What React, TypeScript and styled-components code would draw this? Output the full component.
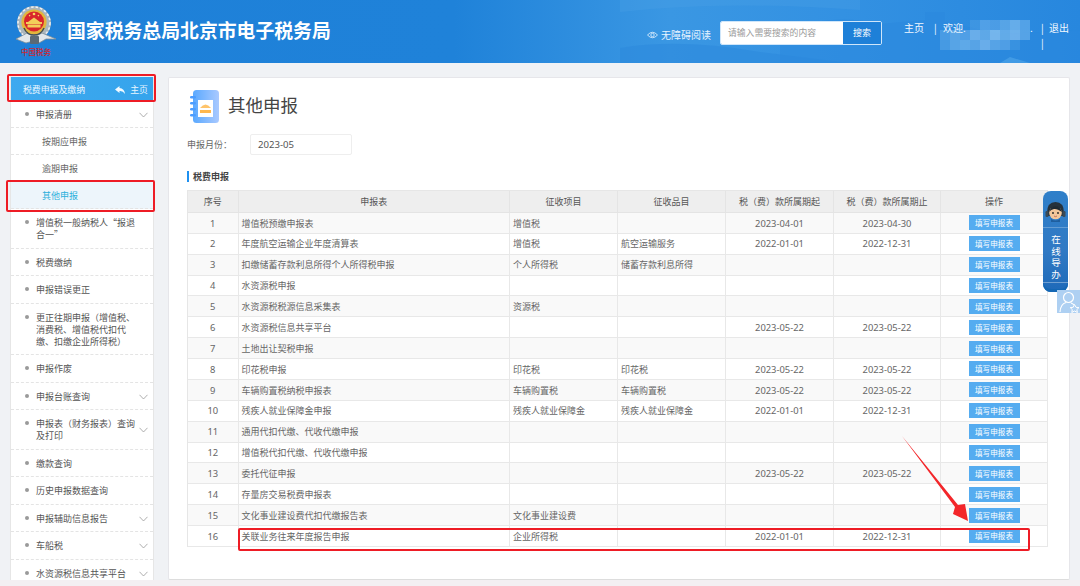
import React from "react";
import styled, { createGlobalStyle } from "styled-components";

const Global = createGlobalStyle`
  html, body { margin: 0; padding: 0; }
  body { font-family: "Noto Sans CJK SC", "Noto Sans", sans-serif; background: #f0f2f5; }
  * { box-sizing: border-box; }
`;

const Page = styled.div`
  position: relative;
  width: 1080px;
  height: 586px;
  overflow: hidden;
  display: flex;
  flex-direction: column;
  background: #f0f2f5;
`;

const Header = styled.header`
  position: relative;
  flex: 0 0 63px;
  display: flex;
  align-items: flex-start;
  background: linear-gradient(90deg, #1e80d8 0%, #1f82d9 42%, #3a97e3 62%, #3391e2 78%, #2787de 100%);
  color: #fff;
  overflow: hidden;
`;

const Scenery = styled.svg`
  position: absolute;
  left: 0;
  top: 0;
`;

const LogoWrap = styled.div`
  position: relative;
  width: 42px;
  margin: 6px 0 0 15px;
  display: flex;
  flex-direction: column;
  align-items: center;
`;

const LogoMotto = styled.span`
  margin-top: -1px;
  font-size: 7.5px;
  line-height: 11px;
  font-weight: 500;
  color: #d0252e;
  white-space: nowrap;
`;

const SiteTitle = styled.h1`
  position: relative;
  margin: 17px 0 0 10px;
  font-size: 18.85px;
  line-height: 26px;
  font-weight: 700;
  white-space: nowrap;
`;

const HeaderRight = styled.div`
  position: relative;
  margin-left: auto;
  display: flex;
  align-items: flex-start;
`;

const Access = styled.div`
  display: flex;
  align-items: center;
  gap: 3px;
  margin-top: 27px;
  font-size: 10px;
  line-height: 16px;
  color: #e6f3ff;
`;

const SearchBox = styled.div`
  width: 162px;
  height: 24px;
  margin: 21px 0 0 9px;
  display: flex;
  border: 1px solid #cfe6fa;
  border-radius: 2px;
  overflow: hidden;
`;

const SearchField = styled.div`
  flex: 1;
  background: #fff;
  color: #9a9a9a;
  font-size: 8.8px;
  line-height: 22px;
  padding-left: 7px;
`;

const SearchButton = styled.div`
  width: 38px;
  background: #1e80d8;
  color: #fff;
  font-size: 9px;
  line-height: 22px;
  text-align: center;
`;

const Nav = styled.nav`
  width: 198px;
  margin-top: 20px;
  padding-left: 22px;
  font-size: 10px;
  line-height: 16px;
  color: #f1f8ff;
`;

const NavLine = styled.div<{ $indent?: number }>`
  display: flex;
  height: 15px;
  padding-left: ${(p) => p.$indent ?? 0}px;
`;

const NavText = styled.span<{ $w: number }>`
  width: ${(p) => p.$w}px;
  white-space: nowrap;
`;

const Mosaic = styled.div`
  position: absolute;
  left: 940px;
  top: 20px;
  display: grid;
  grid-template-columns: repeat(9, 10px);
  grid-auto-rows: 10px;
`;

const Tile = styled.i<{ $a: number }>`
  display: block;
  background: rgba(190, 225, 250, ${(p) => p.$a});
`;

const Body = styled.div`
  flex: 1;
  min-height: 0;
  display: flex;
  padding: 14px 10px 0;
  gap: 14px;
`;

const Sidebar = styled.aside`
  flex: 0 0 144px;
  background: #fff;
  border-left: 1px solid #e6e6e6;
  border-right: 1px solid #e6e6e6;
  overflow: hidden;
`;

const SideHead = styled.div`
  height: 24px;
  margin: 0 -1px;
  display: flex;
  align-items: center;
  justify-content: space-between;
  padding: 1px 6px 0 13px;
  background: linear-gradient(90deg, #3ea9ef, #35a4ec);
  color: #e9f6ff;
  font-size: 8.9px;
`;

const HomeLink = styled.span`
  display: flex;
  align-items: center;
  gap: 5px;
`;

const SideItem = styled.div<{ $sub?: boolean; $active?: boolean; $tight?: boolean }>`
  position: relative;
  display: flex;
  align-items: flex-start;
  padding: 8px 0 ${(p) => (p.$tight ? 6 : 6.5)}px ${(p) => (p.$sub ? 31 : 14)}px;
  border-bottom: 1px dashed #e4e4e4;
  font-size: 9px;
  line-height: 12px;
  color: ${(p) => (p.$active ? "#2bb0dc" : p.$sub ? "#666" : "#555")};
  background: ${(p) => (p.$active ? "#edf5fb" : "#fff")};
`;

const Bullet = styled.i`
  flex: 0 0 4px;
  width: 4px;
  height: 4px;
  margin: 3px 7px 0 0;
  border-radius: 50%;
  background: #9a9a9a;
`;

const SideLabel = styled.span`
  width: 101px;
`;

const Chevron = styled.svg<{ $mid?: boolean }>`
  margin: ${(p) => (p.$mid ? "9px" : "3px")} 0 0 2px;
`;

const Panel = styled.main`
  position: relative;
  flex: 1;
  background: #fff;
  border: 1px solid #e6e6ea;
  border-bottom-color: #ddd;
  border-radius: 2px;
  padding: 11px 0 0 18px;
`;

const TitleRow = styled.div`
  display: flex;
  align-items: center;
  height: 34px;
  padding-left: 3px;
  gap: 9px;
`;

const PageTitle = styled.h2`
  margin: 0 0 2px;
  font-size: 17.5px;
  line-height: 24px;
  font-weight: 400;
  color: #444;
`;

const MonthRow = styled.div`
  display: flex;
  align-items: center;
  margin-top: 11px;
  font-size: 9px;
  color: #666;
`;

const MonthLabel = styled.span`
  width: 63px;
`;

const MonthField = styled.div`
  width: 102px;
  height: 21px;
  padding-left: 7px;
  border: 1px solid #eee;
  border-radius: 2px;
  font-family: "Noto Sans", sans-serif;
  font-size: 9.6px;
  line-height: 19px;
  color: #555;
`;

const Section = styled.h3`
  display: flex;
  align-items: center;
  gap: 4px;
  height: 12px;
  margin: 15px 0 7.5px;
  font-size: 9px;
  font-weight: 700;
  color: #444;
  &::before {
    content: "";
    width: 2px;
    height: 11px;
    background: #1e90f0;
  }
`;

const Table = styled.table`
  width: 860px;
  table-layout: fixed;
  border-collapse: separate;
  border-spacing: 0;
  border-top: 1px solid #e6e6e6;
  border-left: 1px solid #e6e6e6;
  font-size: 9px;
  color: #666;
`;

const Th = styled.th`
  height: 22.4px;
  padding: 1px 0 0;
  background: #eeeeee;
  border-right: 1px solid #e4e4e4;
  border-bottom: 1px solid #e4e4e4;
  font-weight: 400;
  color: #555;
  text-align: center;
`;

const Row = styled.tr`
  &:nth-child(odd) td { background: #f9f9f9; }
`;

const Td = styled.td<{ $center?: boolean; $num?: boolean; $flush?: boolean }>`
  height: 20.875px;
  padding: ${(p) => (p.$flush ? "0 3px" : "1.5px 3px 0")};
  background: #fff;
  border-right: 1px solid #e8e8e8;
  border-bottom: 1px solid #e8e8e8;
  text-align: ${(p) => (p.$center ? "center" : "left")};
  font-family: ${(p) => (p.$num ? '"Noto Sans", sans-serif' : "inherit")};
  font-size: ${(p) => (p.$num ? "9.4px" : "9px")};
  line-height: 12px;
  white-space: nowrap;
`;

const FillButton = styled.div`
  width: 51px;
  height: 15px;
  margin: 0 auto;
  background: #55acf0;
  color: #fff;
  font-size: 7.6px;
  line-height: 15px;
  text-align: center;
`;

const Footer = styled.div`
  flex: 0 0 6px;
  background: #f3eff2;
`;

const Helper = styled.div`
  position: absolute;
  left: 1043px;
  top: 191px;
  width: 25px;
  height: 101px;
  border-radius: 8px;
  background: linear-gradient(180deg, #2f7fc9, #3079c4 60%, #1e69b8);
  display: flex;
  flex-direction: column;
  align-items: center;
  color: #fff;
  box-shadow: inset 0 -3px 0 #1467b4;
`;

const HelperFace = styled.svg`
  margin-top: 10px;
  flex: none;
`;

const HelperText = styled.div`
  width: 100%;
  height: 56px;
  margin-top: 5px;
  padding-top: 5px;
  border-top: 1px solid rgba(255, 255, 255, 0.25);
  border-bottom: 1px solid rgba(255, 255, 255, 0.35);
  display: flex;
  justify-content: center;
  writing-mode: vertical-rl;
  text-orientation: upright;
  font-size: 9.5px;
  line-height: 25px;
  letter-spacing: 1.9px;
`;

const PersonTab = styled.div`
  position: absolute;
  left: 1057px;
  top: 290px;
  width: 23px;
  height: 23px;
  background: #aed0f2;
`;

const RedBox = styled.div<{ $x: number; $y: number; $w: number; $h: number }>`
  position: absolute;
  left: ${(p) => p.$x}px;
  top: ${(p) => p.$y}px;
  width: ${(p) => p.$w}px;
  height: ${(p) => p.$h}px;
  border: 2px solid #ee1c25;
  border-radius: 2px;
`;

const ArrowLayer = styled.svg`
  position: absolute;
  left: 890px;
  top: 425px;
`;

const D1 = "2023-05-22";
const rows: [string, string, string, string, string][] = [
  ["增值税预缴申报表", "增值税", "", "2023-04-01", "2023-04-30"],
  ["年度航空运输企业年度清算表", "增值税", "航空运输服务", "2022-01-01", "2022-12-31"],
  ["扣缴储蓄存款利息所得个人所得税申报", "个人所得税", "储蓄存款利息所得", "", ""],
  ["水资源税申报", "", "", "", ""],
  ["水资源税税源信息采集表", "资源税", "", "", ""],
  ["水资源税信息共享平台", "", "", D1, D1],
  ["土地出让契税申报", "", "", "", ""],
  ["印花税申报", "印花税", "印花税", D1, D1],
  ["车辆购置税纳税申报表", "车辆购置税", "车辆购置税", D1, D1],
  ["残疾人就业保障金申报", "残疾人就业保障金", "残疾人就业保障金", "2022-01-01", "2022-12-31"],
  ["通用代扣代缴、代收代缴申报", "", "", "", ""],
  ["增值税代扣代缴、代收代缴申报", "", "", "", ""],
  ["委托代征申报", "", "", D1, D1],
  ["存量房交易税费申报表", "", "", "", ""],
  ["文化事业建设费代扣代缴报告表", "文化事业建设费", "", "", ""],
  ["关联业务往来年度报告申报", "企业所得税", "", "2022-01-01", "2022-12-31"],
];

const columns = [50.5, 271.5, 108, 108, 108, 107, 107];
const headings = ["序号", "申报表", "征收项目", "征收品目", "税（费）款所属期起", "税（费）款所属期止", "操作"];

const menu: { label: string; sub?: boolean; active?: boolean; arrow?: boolean; mid?: boolean; tight?: boolean }[] = [
  { label: "申报清册", arrow: true, tight: true },
  { label: "按期应申报", sub: true, tight: true },
  { label: "逾期申报", sub: true, tight: true },
  { label: "其他申报", sub: true, active: true, tight: true },
  { label: "增值税一般纳税人“报退合一”" },
  { label: "税费缴纳" },
  { label: "申报错误更正" },
  { label: "更正往期申报（增值税、消费税、增值税代扣代缴、扣缴企业所得税）" },
  { label: "申报作废" },
  { label: "申报台账查询", arrow: true },
  { label: "申报表（财务报表）查询及打印", arrow: true, mid: true },
  { label: "缴款查询" },
  { label: "历史申报数据查询" },
  { label: "申报辅助信息报告", arrow: true },
  { label: "车船税", arrow: true },
  { label: "水资源税信息共享平台", arrow: true },
];

const mosaic = [
  0, 0, 0, 0.12, 0.25, 0.22, 0.3, 0.4, 0.28,
  0.2, 0.3, 0.25, 0.42, 0.35, 0.5, 0.38, 0.45, 0.3,
  0.18, 0.3, 0.35, 0.3, 0.42, 0.3, 0.25, 0.1, 0,
];

const Emblem = () => (
  <svg width="42" height="41" viewBox="0 0 42 41">
    <circle cx="19" cy="17" r="17" fill="#aab6bd" />
    <circle cx="19" cy="17" r="16" fill="none" stroke="#eef2f4" strokeWidth="1.5" strokeDasharray="2.5 2" />
    <circle cx="19" cy="16" r="12.6" fill="#e2b53c" />
    <circle cx="19" cy="15.5" r="10" fill="#d9252c" />
    <rect x="11" y="16" width="16" height="2" fill="#f2cf5a" />
    <path d="M13 16 L19 11.5 L25 16 Z" fill="#f2cf5a" />
    <rect x="12.5" y="18.5" width="13" height="3" fill="#f2cf5a" />
    <circle cx="19" cy="8" r="1.3" fill="#f6d95f" />
    <circle cx="14.6" cy="9.6" r="0.8" fill="#f6d95f" />
    <circle cx="23.4" cy="9.6" r="0.8" fill="#f6d95f" />
    <path d="M1 33 L12 27 L19 31 L27 27 L41 33 L31 33 L24 37 L18 35 L11 37 Z" fill="#e2e7ea" stroke="#7f8e97" strokeWidth="0.8" />
    <rect x="15" y="30" width="9" height="8" rx="1" fill="#5a6a76" />
    <path d="M9 22 Q12 29 19 29 Q26 29 29 22" fill="none" stroke="#3e4d56" strokeWidth="1.4" />
  </svg>
);

const Notebook = () => (
  <svg width="29" height="33" viewBox="0 0 29 33">
    <defs>
      <linearGradient id="nb" x1="0" x2="1" y1="0" y2="0">
        <stop offset="0" stopColor="#5aa9ff" />
        <stop offset="1" stopColor="#a9c9ff" />
      </linearGradient>
    </defs>
    <rect x="3" y="0" width="26" height="33" rx="3.5" fill="url(#nb)" />
    <rect x="8" y="10" width="15" height="17" fill="#fff" />
    <path d="M10 18 Q15.5 11 21 18 Z" fill="#ffc46b" />
    <rect x="10" y="20" width="11" height="3" fill="#ffb84f" />
    <g fill="#4c9dff">
      <rect x="0" y="6" width="6" height="2.4" rx="1.2" />
      <rect x="0" y="12" width="6" height="2.4" rx="1.2" />
      <rect x="0" y="18" width="6" height="2.4" rx="1.2" />
      <rect x="0" y="24" width="6" height="2.4" rx="1.2" />
    </g>
  </svg>
);

export default function App() {
  return (
    <>
      <Global />
      <Page>
        <Header>
          <Scenery width="1080" height="63" viewBox="0 0 1080 63">
            <path d="M620 48 Q680 38 760 52 L850 63 L620 63 Z" fill="#2b88dc" opacity="0.55" />
            <path d="M780 32 Q830 12 880 24 L925 20 L925 12 L945 12 L945 22 L1000 34 L1080 30 L1080 63 L780 63 Z" fill="#2a88de" opacity="0.5" />
            <path d="M620 12 Q720 0 860 10 L860 0 L620 0 Z" fill="#4aa0e6" opacity="0.35" />
            <path d="M1000 63 L1010 57 L1030 63 Z" fill="#4ba2e8" opacity="0.7" />
          </Scenery>
          <LogoWrap>
            <Emblem />
            <LogoMotto>中国税务</LogoMotto>
          </LogoWrap>
          <SiteTitle>国家税务总局北京市电子税务局</SiteTitle>
          <HeaderRight>
            <Access>
              <svg width="11" height="8" viewBox="0 0 11 8" fill="none" stroke="#e6f3ff" strokeWidth="0.8">
                <path d="M0.5 4 Q5.5 -1.5 10.5 4 Q5.5 9.5 0.5 4 Z" />
                <circle cx="5.5" cy="4" r="1.7" />
              </svg>
              无障碍阅读
            </Access>
            <SearchBox>
              <SearchField>请输入需要搜索的内容</SearchField>
              <SearchButton>搜索</SearchButton>
            </SearchBox>
            <Nav>
              <NavLine>
                <NavText $w={30}>主页</NavText>
                <NavText $w={9}>|</NavText>
                <NavText $w={87}>欢迎.</NavText>
                <NavText $w={11}>.</NavText>
                <NavText $w={8}>|</NavText>
                <NavText $w={20}>退出</NavText>
              </NavLine>
              <NavLine $indent={137}>|</NavLine>
            </Nav>
          </HeaderRight>
        </Header>
        <Mosaic>
          {mosaic.map((a, i) => (
            <Tile key={i} $a={a} />
          ))}
        </Mosaic>
        <Body>
          <Sidebar>
            <SideHead>
              税费申报及缴纳
              <HomeLink>
                <svg width="10" height="8" viewBox="0 0 10 8" fill="#f2faff">
                  <path d="M4.5 0 L0 3.5 L4.5 7 L4.5 5 Q8 4.6 10 8 Q9.4 2.6 4.5 2 Z" />
                </svg>
                主页
              </HomeLink>
            </SideHead>
            {menu.map((m) => (
              <SideItem key={m.label} $sub={m.sub} $active={m.active} $tight={m.tight}>
                {!m.sub && <Bullet />}
                <SideLabel>{m.label}</SideLabel>
                {m.arrow && (
                  <Chevron $mid={m.mid} width="9" height="6" viewBox="0 0 9 6" fill="none" stroke="#9a9a9a" strokeWidth="0.8">
                    <path d="M0.5 0.8 L4.5 5 L8.5 0.8" />
                  </Chevron>
                )}
              </SideItem>
            ))}
          </Sidebar>
          <Panel>
            <TitleRow>
              <Notebook />
              <PageTitle>其他申报</PageTitle>
            </TitleRow>
            <MonthRow>
              <MonthLabel>申报月份：</MonthLabel>
              <MonthField>2023-05</MonthField>
            </MonthRow>
            <Section>税费申报</Section>
            <Table>
              <colgroup>
                {columns.map((w, i) => (
                  <col key={i} width={w} />
                ))}
              </colgroup>
              <thead>
                <tr>
                  {headings.map((h) => (
                    <Th key={h}>{h}</Th>
                  ))}
                </tr>
              </thead>
              <tbody>
                {rows.map((r, i) => (
                  <Row key={i}>
                    <Td $center $num>{i + 1}</Td>
                    <Td>{r[0]}</Td>
                    <Td>{r[1]}</Td>
                    <Td>{r[2]}</Td>
                    <Td $center $num>{r[3]}</Td>
                    <Td $center $num>{r[4]}</Td>
                    <Td $center $flush>
                      <FillButton>填写申报表</FillButton>
                    </Td>
                  </Row>
                ))}
              </tbody>
            </Table>
          </Panel>
        </Body>
        <Footer />
        <Helper>
          <HelperFace width="21" height="21" viewBox="0 0 21 21">
            <path d="M2 12 Q2 1 10.5 1 Q19 1 19 12 L19 15 L2 15 Z" fill="#26323c" />
            <circle cx="10.5" cy="12" r="6.3" fill="#f3c79b" />
            <path d="M4 11 Q6 5 10.5 5 Q15 5 17 11 Q12 7.5 9 8 Q6 8.5 4 11 Z" fill="#1f2a33" />
            <circle cx="8" cy="12" r="0.9" fill="#222" />
            <circle cx="13" cy="12" r="0.9" fill="#222" />
            <path d="M9 15 Q10.5 16.3 12 15" stroke="#b24a3a" strokeWidth="0.7" fill="none" />
            <rect x="0.5" y="10" width="3" height="6" rx="1.2" fill="#3a4a57" />
            <rect x="17.5" y="10" width="3" height="6" rx="1.2" fill="#3a4a57" />
            <path d="M6 18 Q10.5 21 15 18 L15 21 L6 21 Z" fill="#1f5f9f" />
          </HelperFace>
          <HelperText>在线导办</HelperText>
        </Helper>
        <PersonTab>
          <svg width="23" height="23" viewBox="0 0 23 23" fill="none" stroke="#fff" strokeWidth="1.2">
            <circle cx="11.5" cy="7.5" r="5" />
            <path d="M3 22 Q3.5 14 9 12.5" />
            <path d="M14 13 Q16 13.6 17 15" />
            <path d="M17.5 14.5 L19 17.3 L22 17.6 L19.8 19.6 L20.4 22.5 L17.5 21 L14.8 22.5 L15.3 19.6 L13.2 17.6 L16.2 17.3 Z" strokeWidth="1" />
          </svg>
        </PersonTab>
        <RedBox $x={7} $y={74} $w={149} $h={28} />
        <RedBox $x={6} $y={180} $w={149} $h={32} />
        <RedBox $x={238} $y={528} $w={792} $h={23} />
        <ArrowLayer width="90" height="105" viewBox="890 425 90 105">
          <path d="M902 436 L958 505 L965 504 L968 521 L953 514 L955 507 Z" fill="#f3262a" />
        </ArrowLayer>
      </Page>
    </>
  );
}
